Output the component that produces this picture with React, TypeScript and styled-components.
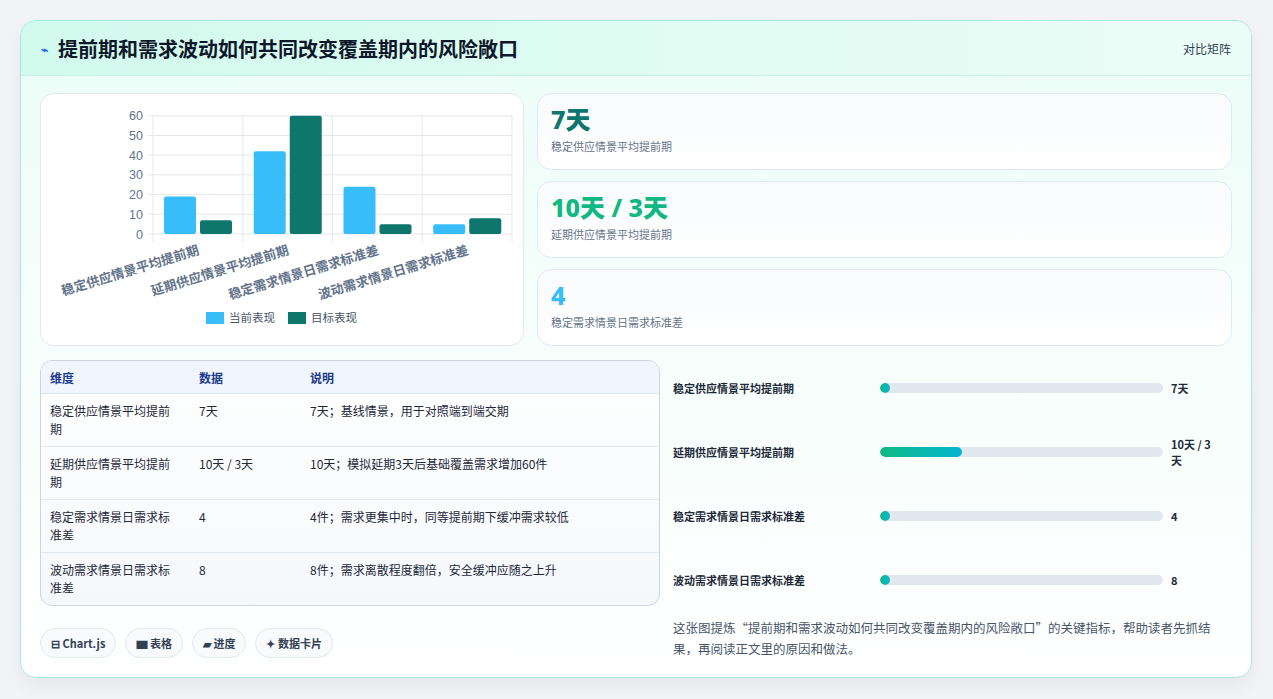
import React from "react";
import styled, { createGlobalStyle } from "styled-components";

const G = createGlobalStyle`
  html,body{margin:0;padding:0;background:#f3f4f6;}
  body{font-family:"Noto Sans CJK SC","Noto Sans",sans-serif;}
`;
const Page = styled.div`padding:20px 21px 21px 20px;width:1273px;height:699px;box-sizing:border-box;`;
const Card = styled.div`
  height:658px;box-sizing:border-box;border:1px solid #a7eadb;border-radius:16px;overflow:hidden;
  background:linear-gradient(180deg,#ecfdf7 0%,#ffffff 100%);box-shadow:0 8px 20px rgba(0,0,0,0.06);
  display:flex;flex-direction:column;
`;
const Header = styled.div`
  height:55px;flex:none;box-sizing:border-box;display:flex;align-items:center;justify-content:space-between;
  padding:0 20px 0 20px;background:linear-gradient(90deg,#d1faed,#ecfdf7);border-bottom:1px solid #c9f0e4;
`;
const Title = styled.h1`margin:0;font-size:20px;font-weight:700;color:#0f172a;display:flex;align-items:center;gap:10px;`;
const Icon = styled.span`font-size:12px;color:#2563eb;`;
const HLink = styled.span`font-size:12px;color:#334155;`;
const Body = styled.div`padding:17px 19px 0 19px;display:flex;flex-direction:column;gap:14px;`;
const TopRow = styled.div`display:grid;grid-template-columns:484px 1fr;gap:13px;`;
const Panel = styled.div`background:#fff;border:1px solid #e2e8f0;border-radius:14px;`;
const ChartBox = styled(Panel)`height:253px;box-sizing:border-box;`;
const Stats = styled.div`display:flex;flex-direction:column;gap:11px;`;
const Stat = styled.div`
  height:77px;box-sizing:border-box;border:1px solid #dbeafe;border-radius:14px;
  background:linear-gradient(180deg,#f8fafc,#ffffff);padding:10px 13px;
`;
const StatV = styled.div<{c:string}>`font-size:25px;font-weight:800;color:${p=>p.c};line-height:30px;font-family:"Noto Sans","Noto Sans CJK SC",sans-serif;`;
const StatL = styled.div`font-size:11px;color:#64748b;margin-top:4px;`;
const BotRow = styled.div`display:grid;grid-template-columns:620px 1fr;gap:13px;`;
const Left = styled.div`display:flex;flex-direction:column;gap:22px;`;
const Table = styled.table`
  width:100%;border-collapse:separate;border-spacing:0;border:1px solid #cbd5e1;border-radius:12px;overflow:hidden;
  background:linear-gradient(180deg,#ffffff,#f5f8fb);font-size:12px;color:#1e293b;
`;
const Th = styled.th`text-align:left;font-weight:700;color:#1e3a8a;background:#eff6ff;padding:0 9px;height:32px;border-bottom:1px solid #dbe3ee;font-size:12px;`;
const Td = styled.td`padding:8px 9px;height:36px;vertical-align:top;line-height:18px;border-bottom:1px solid #e2e8f0;tr:last-child &{border-bottom:none;}`;
const Chips = styled.div`display:flex;gap:9px;`;
const Chip = styled.span`
  height:30px;box-sizing:border-box;padding:0 10px;border:1px solid #e2e8f0;border-radius:15px;background:#f8fafc;
  display:inline-flex;align-items:center;gap:4px;font-size:11px;font-weight:700;color:#334155;
`;
const Right = styled.div`display:flex;flex-direction:column;padding-right:14px;`;
const Bars = styled.div`display:flex;flex-direction:column;margin-top:-4px;`;
const BarRow = styled.div`height:64px;display:grid;grid-template-columns:199px 283px 1fr;align-items:center;gap:8px;font-size:11px;font-weight:600;color:#1e293b;`;
const Track = styled.div`height:10px;border-radius:5px;background:#e2e8f0;overflow:hidden;`;
const Fill = styled.div`height:100%;border-radius:5px;background:linear-gradient(90deg,#10b981,#06b6d4);`;
const Val = styled.span`font-weight:700;`;
const Note = styled.p`margin:0;padding-top:5px;font-size:12.5px;line-height:21px;color:#475569;`;

const cats=["稳定供应情景平均提前期","延期供应情景平均提前期","稳定需求情景日需求标准差","波动需求情景日需求标准差"];
const cur=[19,42,24,5], tgt=[7,60,5,8];

function Chart(){
  const x0=112,x1=471,y0=140,py=1.97,w=(x1-x0)/4;
  return <svg width="484" height="253">
    {[0,10,20,30,40,50,60].map(v=>{const y=y0-v*py;return <g key={v}>
      <line x1={x0-5} x2={x1} y1={y} y2={y} stroke="#e5e7eb"/>
      <text x={x0-10} y={y+4.5} textAnchor="end" fontSize="12.5" fill="#64748b" fontFamily="Liberation Sans,sans-serif">{v}</text></g>})}
    {[0,1,2,3,4].map(i=><line key={i} x1={x0+i*w} x2={x0+i*w} y1={y0-60*py} y2={y0+8} stroke="#e5e7eb"/>)}
    {cats.map((c,i)=>{const cx=x0+i*w;return <g key={c}>
      <rect x={cx+11} y={y0-cur[i]*py} width={32} height={cur[i]*py} rx="2" fill="#38bdf8"/>
      <rect x={cx+47} y={y0-tgt[i]*py} width={32} height={tgt[i]*py} rx="2" fill="#0f766e"/>
      <text transform={`translate(${cx+w/2+2},${y0+20}) rotate(-17)`} textAnchor="end" fontSize="13" fontWeight="700" fill="#64748b">{c}</text>
    </g>})}
    <rect x="165" y="218" width="18" height="12" fill="#38bdf8"/>
    <text x="188" y="228" fontSize="11.5" fill="#475569">当前表现</text>
    <rect x="247" y="218" width="18" height="12" fill="#0f766e"/>
    <text x="270" y="228" fontSize="11.5" fill="#475569">目标表现</text>
  </svg>;
}

const rows=[["稳定供应情景平均提前期","7天","7天；基线情景，用于对照端到端交期"],["延期供应情景平均提前期","10天 / 3天","10天；模拟延期3天后基础覆盖需求增加60件"],["稳定需求情景日需求标准差","4","4件；需求更集中时，同等提前期下缓冲需求较低"],["波动需求情景日需求标准差","8","8件；需求离散程度翻倍，安全缓冲应随之上升"]];
const bars:[string,number,string][]= [["稳定供应情景平均提前期",0,"7天"],["延期供应情景平均提前期",29,"10天 / 3天"],["稳定需求情景日需求标准差",0,"4"],["波动需求情景日需求标准差",0,"8"]];

export default function App(){
  return <Page><G/><Card>
    <Header><Title><Icon>⌁</Icon>提前期和需求波动如何共同改变覆盖期内的风险敞口</Title><HLink>对比矩阵</HLink></Header>
    <Body>
      <TopRow>
        <ChartBox><Chart/></ChartBox>
        <Stats>
          <Stat><StatV c="#0f766e">7天</StatV><StatL>稳定供应情景平均提前期</StatL></Stat>
          <Stat><StatV c="#10b981">10天 / 3天</StatV><StatL>延期供应情景平均提前期</StatL></Stat>
          <Stat><StatV c="#38bdf8">4</StatV><StatL>稳定需求情景日需求标准差</StatL></Stat>
        </Stats>
      </TopRow>
      <BotRow>
        <Left>
          <Table><thead><tr><Th style={{width:131}}>维度</Th><Th style={{width:93}}>数据</Th><Th>说明</Th></tr></thead>
            <tbody>{rows.map(r=><tr key={r[0]}><Td>{r[0]}</Td><Td>{r[1]}</Td><Td>{r[2]}</Td></tr>)}</tbody></Table>
          <Chips><Chip>⊟ Chart.js</Chip><Chip>▆ 表格</Chip><Chip>▰ 进度</Chip><Chip>✦ 数据卡片</Chip></Chips>
        </Left>
        <Right>
          <Bars>{bars.map(b=><BarRow key={b[0]}><span>{b[0]}</span><Track><Fill style={{width:`max(10px,${b[1]}%)`}}/></Track><Val>{b[2]}</Val></BarRow>)}</Bars>
          <Note>这张图提炼“提前期和需求波动如何共同改变覆盖期内的风险敞口”的关键指标，帮助读者先抓结果，再阅读正文里的原因和做法。</Note>
        </Right>
      </BotRow>
    </Body>
  </Card></Page>;
}
